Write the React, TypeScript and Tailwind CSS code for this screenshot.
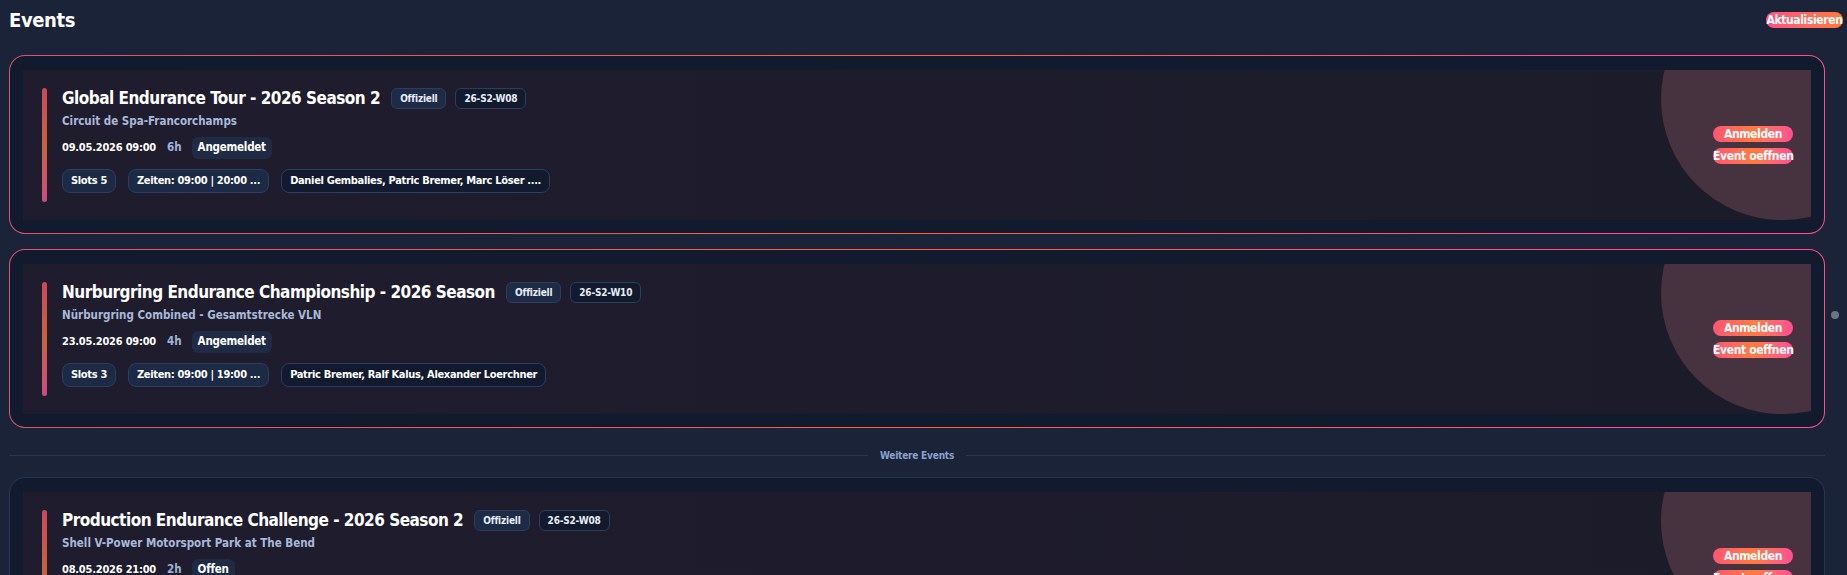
import React from "react"

type EventItem = {
  title: string
  track: string
  date: string
  duration: string
  status: string
  code: string
  slots: number
  times: string
  drivers: string
  highlighted: boolean
}

const upcoming: EventItem[] = [
  {
    title: "Global Endurance Tour - 2026 Season 2",
    track: "Circuit de Spa-Francorchamps",
    date: "09.05.2026 09:00",
    duration: "6h",
    status: "Angemeldet",
    code: "26-S2-W08",
    slots: 5,
    times: "Zeiten: 09:00 | 20:00 ...",
    drivers: "Daniel Gembalies, Patric Bremer, Marc Löser ....",
    highlighted: true,
  },
  {
    title: "Nurburgring Endurance Championship - 2026 Season",
    track: "Nürburgring Combined - Gesamtstrecke VLN",
    date: "23.05.2026 09:00",
    duration: "4h",
    status: "Angemeldet",
    code: "26-S2-W10",
    slots: 3,
    times: "Zeiten: 09:00 | 19:00 ...",
    drivers: "Patric Bremer, Ralf Kalus, Alexander Loerchner",
    highlighted: true,
  },
]

const more: EventItem[] = [
  {
    title: "Production Endurance Challenge - 2026 Season 2",
    track: "Shell V-Power Motorsport Park at The Bend",
    date: "08.05.2026 21:00",
    duration: "2h",
    status: "Offen",
    code: "26-S2-W08",
    slots: 4,
    times: "Zeiten: 21:00 ...",
    drivers: "Noch keine Fahrer",
    highlighted: false,
  },
]

function GradientButton({ children }: { children: React.ReactNode }) {
  return (
    <button className="h-4 w-[80px] rounded-full bg-gradient-to-r from-[#ff5470] via-[#ff7a3d] to-[#ff4f90] text-center text-[12px] leading-4 font-bold tracking-[-0.03em] whitespace-nowrap text-white">
      {children}
    </button>
  )
}

function Chip({ children, dark = false }: { children: React.ReactNode; dark?: boolean }) {
  return (
    <span
      className={`flex h-6 items-center rounded-lg border border-[#2c3d5e] px-2 text-[11px] font-bold tracking-[-0.03em] whitespace-nowrap text-white ${
        dark ? "bg-[#111a2e]" : "bg-[#1c2a45]"
      }`}
    >
      {children}
    </span>
  )
}

function EventCard({ event }: { event: EventItem }) {
  const frame = event.highlighted
    ? "bg-gradient-to-r from-[#dc5468] via-[#ff5f3a] to-[#ff4d8d]"
    : "bg-[#263552]"

  return (
    <div className={`rounded-2xl p-px ${frame}`}>
      <div className="rounded-[15px] bg-[#121a2e] pt-[14px] pr-[13px] pb-[13px] pl-[13px]">
        <div className="relative flex h-[150px] overflow-hidden bg-gradient-to-r from-[#1f1d2d] to-[#1c1b2a] py-[18px] pr-4 pl-[19px]">
          {/* soft disc behind the actions */}
          <div className="absolute -top-[92px] -right-[92px] h-[242px] w-[242px] rounded-full bg-[#47333f]" />

          <div className="w-[5px] shrink-0 rounded-full bg-gradient-to-b from-[#c9485a] via-[#c8623c] to-[#cc4a80]" />

          <div className="ml-[15px] flex flex-col pb-[9px]">
            <div className="flex h-[21px] items-center">
              <h3 className="text-[17px] leading-[21px] font-bold tracking-[-0.03em] whitespace-nowrap text-white">
                {event.title}
              </h3>
              <span className="ml-[11px] flex h-[21px] items-center rounded-md border border-[#2c3d5e] bg-[#1e2b47] px-2 text-[10px] font-bold tracking-[-0.02em] text-[#e6ecf8]">
                Offiziell
              </span>
              <span className="ml-[9px] flex h-[21px] items-center rounded-md border border-[#2c3d5e] bg-[#121a2e] px-2 text-[10px] font-bold tracking-[-0.02em] text-[#e6ecf8]">
                {event.code}
              </span>
            </div>

            <p className="mt-1 text-[11.5px] leading-4 font-bold whitespace-nowrap text-[#a9b9d9]">{event.track}</p>

            <div className="mt-2 flex h-[22px] items-center">
              <span className="text-[11px] font-bold tracking-[-0.02em] text-white">{event.date}</span>
              <span className="ml-[11px] text-[11.5px] font-bold text-[#9fb3d6]">{event.duration}</span>
              <span className="ml-[10px] flex h-[22px] items-center rounded-md bg-[#1f2b45] px-1.5 text-[11.5px] font-bold tracking-[-0.02em] text-white">
                {event.status}
              </span>
            </div>

            <div className="mt-[10px] flex h-6 items-center gap-3">
              <Chip>Slots {event.slots}</Chip>
              <Chip>{event.times}</Chip>
              <Chip dark>{event.drivers}</Chip>
            </div>
          </div>

          <div className="relative mr-[2px] ml-auto flex flex-col gap-[6px] self-center">
            <GradientButton>Anmelden</GradientButton>
            <GradientButton>Event oeffnen</GradientButton>
          </div>
        </div>
      </div>
    </div>
  )
}

export default function App() {
  return (
    <div className="relative min-h-screen bg-[#1a2338] font-['Liberation_Sans_Narrow','DejaVu_Sans_Condensed',sans-serif]">
      <div className="mr-[22px] ml-[9px] pt-1.5">
        <div className="flex h-7 items-center justify-between">
          <h1 className="text-[20px] leading-7 font-bold tracking-[-0.02em] text-white">Events</h1>
          <button className="-mr-[18px] h-4 w-[77px] rounded-full bg-gradient-to-r from-[#ff4f80] to-[#ff7a35] text-center text-[12px] leading-4 font-bold tracking-[-0.03em] whitespace-nowrap text-white">
            Aktualisieren
          </button>
        </div>

        <div className="mt-[21px] flex flex-col gap-[15px]">
          {upcoming.map((ev) => (
            <EventCard key={ev.title} event={ev} />
          ))}

          <div className="mt-[5px] flex h-[14px] items-center gap-3">
            <div className="h-px flex-1 bg-[#2a3650]" />
            <span className="text-[10px] font-bold tracking-[-0.02em] text-[#8aa2cc]">Weitere Events</span>
            <div className="h-px flex-1 bg-[#2a3650]" />
          </div>

          {more.map((ev) => (
            <EventCard key={ev.title} event={ev} />
          ))}
        </div>
      </div>

      {/* scroll position marker */}
      <div className="absolute top-[311px] right-2 h-2 w-2 rounded-full bg-[#6b7487]" />
    </div>
  )
}
